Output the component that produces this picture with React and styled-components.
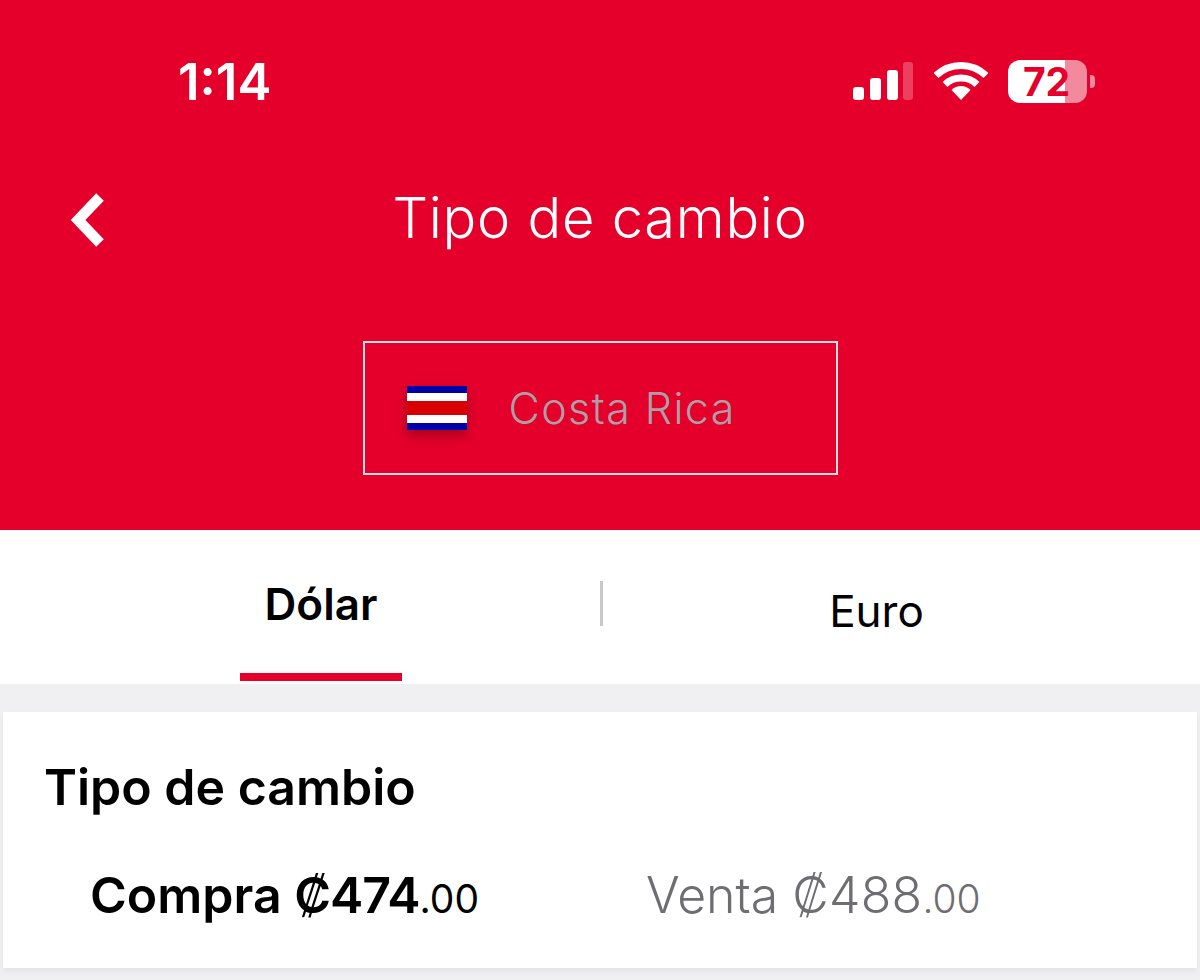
import React from "react";
import styled, { createGlobalStyle } from "styled-components";

const GlobalStyle = createGlobalStyle`
  html, body {
    margin: 0;
    padding: 0;
    background: #f0f0f3;
    font-family: "Inter", "Liberation Sans", sans-serif;
  }
`;

const Page = styled.div`
  width: 1200px;
  height: 980px;
  overflow: hidden;
  background: #f0f0f3;
`;

const Header = styled.header`
  height: 530px;
  box-sizing: border-box;
  background: #e4002b;
  color: #fff;
  display: flex;
  flex-direction: column;
`;

const StatusBar = styled.div`
  height: 60px;
  margin-top: 51px;
  padding: 0 113px 0 178px;
  display: flex;
  align-items: center;
  justify-content: space-between;
`;

const Clock = styled.div`
  font-size: 51px;
  font-weight: 600;
`;

const StatusIcons = styled.div`
  display: flex;
  align-items: center;
  gap: 20px;
`;

const NavRow = styled.div`
  height: 96px;
  margin-top: 59px;
  padding: 0 68px;
  display: flex;
  align-items: center;
`;

const BackButton = styled.div`
  width: 44px;
  display: flex;
  margin-top: 3px;
`;

const NavTitle = styled.h1`
  flex: 1;
  margin: 0 44px 0 0;
  text-align: center;
  font-size: 56px;
  font-weight: 350;
  letter-spacing: 0.75px;
`;

const CountryBox = styled.div`
  width: 475px;
  height: 134px;
  box-sizing: border-box;
  margin: 75px auto 0;
  padding-left: 42px;
  border: 2.5px solid #f9dfe3;
  display: flex;
  align-items: center;
  gap: 42px;
`;

const Flag = styled.div`
  width: 60px;
  height: 44px;
  box-shadow: 0 6px 10px rgba(90, 0, 20, 0.4);
  background: linear-gradient(
    #0000a8 0 7px,
    #fff 7px 15px,
    #d80000 15px 29px,
    #fff 29px 37px,
    #0000a8 37px 44px
  );
`;

const CountryName = styled.span`
  font-size: 43px;
  font-weight: 350;
  letter-spacing: 1.4px;
  color: #ad9fa3;
`;

const Tabs = styled.nav`
  height: 154px;
  background: #fff;
  display: flex;
  align-items: flex-start;
`;

const Tab = styled.div`
  width: ${(p) => p.$width}px;
  margin-left: ${(p) => p.$offset}px;
  height: ${(p) => (p.$active ? 151 : 154)}px;
  box-sizing: border-box;
  display: flex;
  justify-content: center;
  padding-top: ${(p) => p.$top}px;
  font-size: 44px;
  font-weight: ${(p) => (p.$active ? 600 : 400)};
  color: #000;
  border-bottom: ${(p) => (p.$active ? "8px solid #e4002b" : "none")};
`;

const TabDivider = styled.div`
  width: 3px;
  height: 45px;
  margin: 51px 0 0 198px;
  background: #c8c8cc;
`;

const Card = styled.section`
  height: 256px;
  box-sizing: border-box;
  margin: 28px 3px 0;
  padding: 46px 0 0 41px;
  background: #fff;
  box-shadow: 0 3px 6px rgba(0, 0, 0, 0.06);
`;

const CardTitle = styled.h2`
  margin: 0;
  font-size: 50px;
  font-weight: 600;
  line-height: 58px;
  color: #000;
`;

const Rates = styled.div`
  margin-top: 51px;
  padding-left: 46px;
  display: flex;
`;

const Rate = styled.div`
  width: ${(p) => (p.$muted ? "auto" : "556px")};
  font-size: 50px;
  line-height: 56px;
  font-weight: ${(p) => (p.$muted ? 350 : 600)};
  color: ${(p) => (p.$muted ? "#6e6e72" : "#000")};
  white-space: nowrap;
`;

const Whole = styled.span`
  letter-spacing: ${(p) => (p.$muted ? "0.3px" : "-1px")};
`;

const Cents = styled.span`
  font-size: 39px;
  font-weight: ${(p) => (p.$muted ? 350 : 400)};
`;

const SignalBars = () => (
  <svg width="62" height="40" viewBox="0 0 62 40">
    <rect x="1" y="26" width="11" height="13" rx="3" fill="#fff" />
    <rect x="18" y="17" width="11" height="22" rx="3" fill="#fff" />
    <rect x="35" y="9" width="11" height="30" rx="3" fill="#fff" />
    <rect x="51" y="1" width="10" height="38" rx="3" fill="#fff" opacity="0.25" />
  </svg>
);

const WifiIcon = () => (
  <svg width="54" height="40" viewBox="0 0 54 40">
    <path d="M2 14.5 A36 36 0 0 1 52 14.5" fill="none" stroke="#fff" strokeWidth="7" />
    <path d="M11 23.5 A23 23 0 0 1 43 23.5" fill="none" stroke="#fff" strokeWidth="7" />
    <path d="M17.5 29 A13.5 13.5 0 0 1 36.5 29 L27 39 Z" fill="#fff" />
  </svg>
);

const Battery = styled.div`
  position: relative;
  width: 79px;
  height: 43px;
  border-radius: 12px;
  background: linear-gradient(90deg, #fff 0 57px, #f3899d 57px 79px);
  display: flex;
  align-items: center;
  justify-content: center;
  padding-right: 2px;
  box-sizing: border-box;
  color: #e4002b;
  font-size: 39px;
  font-weight: 700;

  &::after {
    content: "";
    position: absolute;
    right: -8px;
    top: 15px;
    width: 5px;
    height: 13px;
    border-radius: 0 4px 4px 0;
    background: #f3899d;
  }
`;

const ChevronLeft = () => (
  <svg width="38" height="54" viewBox="0 0 38 54">
    <path d="M32 4 L10 27 L32 50" fill="none" stroke="#fff" strokeWidth="10.5" />
  </svg>
);

export default function App() {
  return (
    <>
      <GlobalStyle />
      <Page>
        <Header>
          <StatusBar>
            <Clock>1:14</Clock>
            <StatusIcons>
              <SignalBars />
              <WifiIcon />
              <Battery>72</Battery>
            </StatusIcons>
          </StatusBar>
          <NavRow>
            <BackButton>
              <ChevronLeft />
            </BackButton>
            <NavTitle>Tipo de cambio</NavTitle>
          </NavRow>
          <CountryBox>
            <Flag />
            <CountryName>Costa Rica</CountryName>
          </CountryBox>
        </Header>
        <Tabs>
          <Tab $active $offset={240} $width={162} $top={47}>Dólar</Tab>
          <TabDivider />
          <Tab $offset={0} $width={547} $top={54}>Euro</Tab>
        </Tabs>
        <Card>
          <CardTitle>Tipo de cambio</CardTitle>
          <Rates>
            <Rate>Compra <Whole>₡474</Whole><Cents>.00</Cents></Rate>
            <Rate $muted>Venta <Whole $muted>₡488</Whole><Cents $muted>.00</Cents></Rate>
          </Rates>
        </Card>
      </Page>
    </>
  );
}
